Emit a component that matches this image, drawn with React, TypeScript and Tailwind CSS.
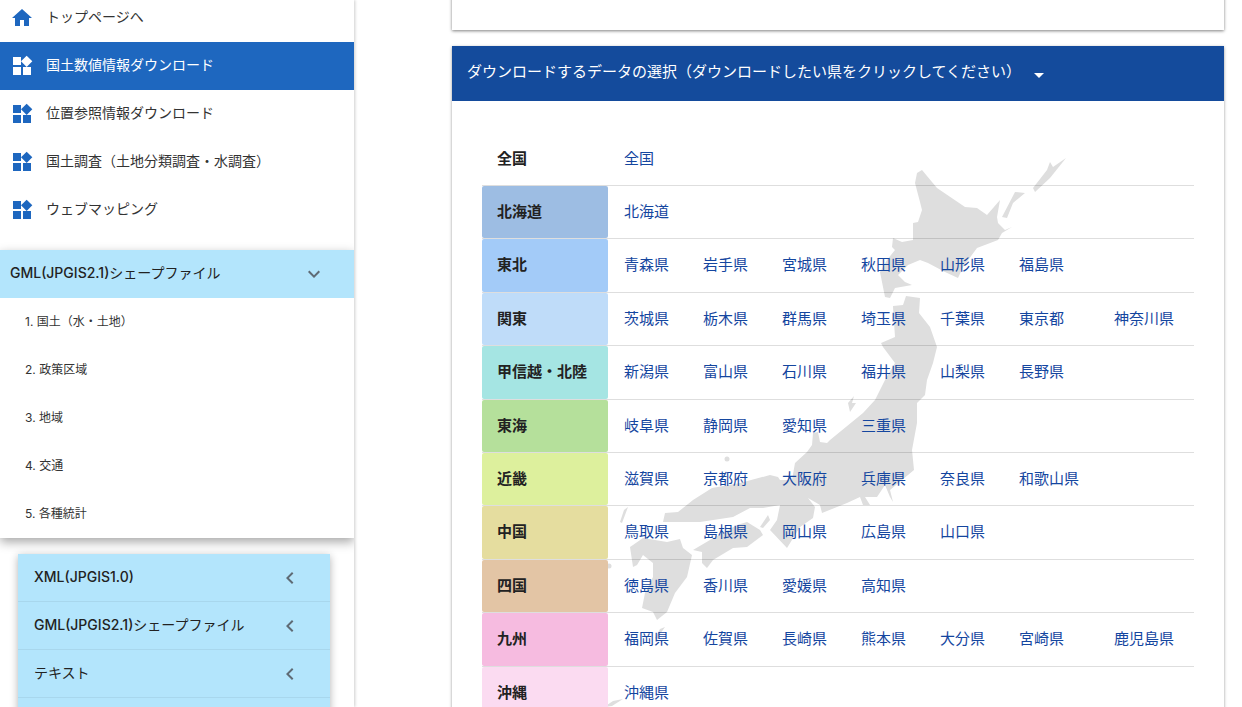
const navItems = [
  { label: '国土数値情報ダウンロード', active: true },
  { label: '位置参照情報ダウンロード', active: false },
  { label: '国土調査（土地分類調査・水調査）', active: false },
  { label: 'ウェブマッピング', active: false },
]

const subItems = ['1. 国土（水・土地）', '2. 政策区域', '3. 地域', '4. 交通', '5. 各種統計']

const formats = [
  { latin: 'XML(JPGIS1.0)', rest: '' },
  { latin: 'GML(JPGIS2.1)', rest: 'シェープファイル' },
  { latin: '', rest: 'テキスト' },
  { latin: '', rest: '' },
]

const regions = [
  { name: '全国', color: 'bg-transparent', prefs: ['全国'] },
  { name: '北海道', color: 'bg-[#9dbde3]', prefs: ['北海道'] },
  { name: '東北', color: 'bg-[#a3cbf8]', prefs: ['青森県', '岩手県', '宮城県', '秋田県', '山形県', '福島県'] },
  { name: '関東', color: 'bg-[#bfdcf9]', prefs: ['茨城県', '栃木県', '群馬県', '埼玉県', '千葉県', '東京都', '神奈川県'] },
  { name: '甲信越・北陸', color: 'bg-[#a5e5e3]', prefs: ['新潟県', '富山県', '石川県', '福井県', '山梨県', '長野県'] },
  { name: '東海', color: 'bg-[#b5e09b]', prefs: ['岐阜県', '静岡県', '愛知県', '三重県'] },
  { name: '近畿', color: 'bg-[#ddf09d]', prefs: ['滋賀県', '京都府', '大阪府', '兵庫県', '奈良県', '和歌山県'] },
  { name: '中国', color: 'bg-[#e5dd9f]', prefs: ['鳥取県', '島根県', '岡山県', '広島県', '山口県'] },
  { name: '四国', color: 'bg-[#e3c5a5]', prefs: ['徳島県', '香川県', '愛媛県', '高知県'] },
  { name: '九州', color: 'bg-[#f6bbe0]', prefs: ['福岡県', '佐賀県', '長崎県', '熊本県', '大分県', '宮崎県', '鹿児島県'] },
  { name: '沖縄', color: 'bg-[#fbdbf1]', prefs: ['沖縄県'] },
]

function WidgetsIcon({ className }: { className: string }) {
  return (
    <svg viewBox="0 0 24 24" className={className} fill="currentColor">
      <path d="M13 13v8h8v-8h-8zM3 21h8v-8H3v8zM3 3v8h8V3H3zm13.66-1.31L11 7.34 16.66 13l5.66-5.66-5.66-5.65z" />
    </svg>
  )
}

function Chevron({ dir }: { dir: 'down' | 'left' }) {
  return (
    <svg viewBox="0 0 24 24" className="w-6 h-6 text-[#5f6b75]" fill="currentColor">
      {dir === 'down' ? (
        <path d="M7.41 8.59 12 13.17l4.59-4.58L18 10l-6 6-6-6z" />
      ) : (
        <path d="M15.41 7.41 14 6l-6 6 6 6 1.41-1.41L10.83 12z" />
      )}
    </svg>
  )
}

function JapanMap() {
  return (
    <svg viewBox="452 46 772 661" className="absolute left-0 top-0 w-[772px] h-[661px]" fill="#dedede">
      {/* hokkaido */}
      <path d="M922 170L917 173L915 183L920 202L922 210L918 222L913 223L913 240L902 242L893 238L892 247L895 250L887 260L880 272L885 297L890 298L895 288L912 285L905 282L898 275L908 265L920 260L928 263L945 272L958 278L963 267L977 248L998 240L1002 233L1012 227L1005 230L998 223L997 217L1000 200L987 215L977 208L965 207L937 188Z" />
      <path d="M1025 193L1015 192L1002 217L1007 218L1013 203Z" />
      <path d="M1066 158L1053 167L1050 162L1047 170L1033 188L1035 192L1050 178Z" />
      {/* honshu */}
      <path d="M893 306L903 305L906 296L920 298L919 313L930 327L937 347L933 363L927 380L925 395L917 403L917 423L912 450L914 470L902 480L890 490L893 502L890 497L885 485L877 497L865 497L870 505L863 505L860 497L847 503L822 513L820 505L808 498L815 507L813 518L800 527L787 548L770 530L777 520L780 505L763 508L750 508L733 517L700 522L680 522L663 522L665 513L678 512L693 500L712 488L740 483L770 475L778 477L780 480L792 480L795 463L807 452L812 445L813 433L818 432L820 442L827 443L830 440L863 413L875 400L885 380L895 363L883 347L881 343L895 337L893 307Z" />
      <path d="M854 396L852 403L856 403L850 412L848 403Z" />
      {/* shikoku */}
      <path d="M693 550L710 540L737 525L747 522L760 530L763 535L747 547L733 548L713 560L707 568L702 563L702 552Z" />
      <path d="M768 515L760 527L763 528L770 520Z" />
      {/* kyushu */}
      <path d="M633 545L643 538L667 542L680 539L683 548L692 555L687 577L675 593L667 612L657 620L653 612L642 608L645 593L653 577L653 563L643 555L637 565L633 567L630 547Z" />
      {/* small islands */}
      <path d="M628 507L625 515L622 523L620 522L624 510Z" />
      <circle cx="727" cy="459" r="2.5" />
      <circle cx="609" cy="566" r="2.5" />
      <path d="M665 627L660 634L657 640L655 638L660 629Z" />
      <path d="M623 699L612 706L604 707L613 701Z" />
    </svg>
  )
}

function Sidebar() {
  return (
    <aside className="w-[354px] shrink-0 h-[707px] overflow-hidden bg-white shadow-[1px_0_3px_rgba(0,0,0,0.2)] relative z-10">
      <div className="-mt-[6px] h-12 flex items-center pl-[10px] gap-3 text-[14px] text-[#333]">
        <svg viewBox="0 0 24 24" className="w-6 h-6 text-[#1e67bf]" fill="currentColor">
          <path d="M10 20v-6h4v6h5v-8h3L12 3 2 12h3v8z" />
        </svg>
        <span className="mb-1">トップページへ</span>
      </div>
      {navItems.map((item) => (
        <div
          key={item.label}
          className={`h-12 flex items-center pl-[10px] gap-3 text-[14px] ${item.active ? 'bg-[#1e67bf] text-white' : 'text-[#333]'}`}
        >
          <WidgetsIcon className={`w-6 h-6 ${item.active ? 'text-white' : 'text-[#1e67bf]'}`} />
          <span className="mb-1">{item.label}</span>
        </div>
      ))}

      <section className="mt-4 shadow-[0_4px_10px_rgba(0,0,0,0.35)]">
        <div className="h-12 flex items-center justify-between pl-[10px] pr-[28px] bg-[#b3e5fc] text-[14px] text-[#222]">
          <span className="mb-1">
            <span className="font-medium">GML(JPGIS2.1)</span>シェープファイル
          </span>
          <Chevron dir="down" />
        </div>
        {subItems.map((item) => (
          <div key={item} className="h-12 flex items-center pl-[25px] text-[12px] text-[#333] bg-white">
            {item}
          </div>
        ))}
      </section>

      <section className="ml-[18px] mr-[24px] mt-4 shadow-[0_2px_8px_rgba(0,0,0,0.3)]">
        {formats.map((item, i) => (
          <div
            key={i}
            className="h-12 flex items-center justify-between pl-4 pr-[28px] bg-[#b3e5fc] border-b border-black/[0.06] text-[14px] text-[#222]"
          >
            <span className="mb-[3px]">
              <span className="font-medium">{item.latin}</span>
              {item.rest}
            </span>
            <Chevron dir="left" />
          </div>
        ))}
      </section>
    </aside>
  )
}

function RegionRow({ name, color, prefs }: { name: string; color: string; prefs: string[] }) {
  return (
    <div className="h-[53.4px] flex border-b border-black/[0.13] last:border-b-0">
      <div className={`w-[126px] shrink-0 flex items-center pl-[15px] rounded-[2px] font-bold text-[#222] ${color}`}>{name}</div>
      <div className="flex-1 ml-4 grid grid-cols-[79px_79px_79px_79px_79px_95px_1fr] items-center text-[#14469f]">
        {prefs.map((pref) => (
          <a key={pref}>{pref}</a>
        ))}
      </div>
    </div>
  )
}

export default function App() {
  return (
    <div className="flex h-[707px] overflow-hidden bg-white font-['Inter','Noto_Sans_CJK_JP',sans-serif]">
      <Sidebar />
      <main className="flex-1 pl-[98px] pr-[18px]">
        <div className="-mt-[10px] h-[39.5px] bg-white shadow-[0_1px_3px_rgba(0,0,0,0.5)]" />
        <div className="relative mt-[16.5px] bg-white shadow-[0_1px_3px_rgba(0,0,0,0.4)] h-[700px]">
          <div className="h-[55px] flex items-center gap-[13px] pl-[15px] bg-[#144b9c] text-[15px] text-white">
            <span className="mb-[3px]">ダウンロードするデータの選択（ダウンロードしたい県をクリックしてください）</span>
            <span className="mt-[4px] border-x-[5px] border-t-[5px] border-x-transparent border-t-white" />
          </div>
          <JapanMap />
          <div className="relative mx-[30px] mt-[31.7px] text-[15px]">
            {regions.map((region) => (
              <RegionRow key={region.name} {...region} />
            ))}
          </div>
        </div>
      </main>
    </div>
  )
}
